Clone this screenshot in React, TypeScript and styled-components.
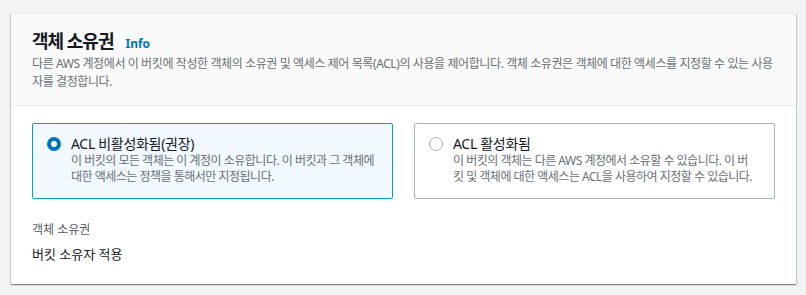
import React from "react";
import styled, { createGlobalStyle } from "styled-components";

const Global = createGlobalStyle`
  html, body { margin: 0; padding: 0; background: #f2f3f3; }
  body { font-family: "Noto Sans", "Noto Sans CJK KR", sans-serif; color: #16191f; }
`;

const Page = styled.div`
  padding: 13px 10px 11px 11px;
`;

const Card = styled.section`
  background: #ffffff;
  box-shadow: 0 1px 1px 0 rgba(0, 28, 36, 0.3), 1px 1px 1px 0 rgba(0, 28, 36, 0.15),
    -1px 1px 1px 0 rgba(0, 28, 36, 0.15);
  border-top: 1px solid #eaeded;
`;

const Header = styled.header`
  background: #fafafa;
  border-bottom: 1px solid #eaeded;
  padding: 14px 21px 14px 21px;
`;

const TitleRow = styled.div`
  display: flex;
  align-items: baseline;
  gap: 12px;
`;

const Title = styled.h2`
  margin: 0;
  font-size: 18px;
  line-height: 26px;
  font-weight: 700;
  letter-spacing: -1px;
  color: #16191f;
`;

const InfoLink = styled.a`
  font-size: 12px;
  font-weight: 700;
  color: #0073bb;
  text-decoration: none;
`;

const HeaderDesc = styled.p`
  margin: 1px 0 0 0;
  font-size: 12px;
  line-height: 18px;
  letter-spacing: -0.4px;
  color: #687078;
`;

const Body = styled.div`
  padding: 17px 21px 20px 21px;
`;

const Options = styled.div`
  display: grid;
  grid-template-columns: 1fr 1fr;
  gap: 21px;
`;

const Option = styled.label<{ $selected?: boolean }>`
  display: flex;
  gap: 10px;
  border: 1px solid ${(p) => (p.$selected ? "#00a1c9" : "#aab7b8")};
  background: ${(p) => (p.$selected ? "#f1f8fe" : "#ffffff")};
  border-radius: 2px;
  padding: 11px 16px 13px 14px;
  cursor: pointer;
`;

const Radio = styled.span<{ $selected?: boolean }>`
  flex: none;
  box-sizing: border-box;
  width: 14px;
  height: 14px;
  margin-top: 2px;
  border-radius: 50%;
  background: #ffffff;
  border: ${(p) => (p.$selected ? "4px solid #0073bb" : "1px solid #aab7b8")};
`;

const OptionText = styled.div`
  display: flex;
  flex-direction: column;
`;

const OptionLabel = styled.span`
  font-size: 14px;
  line-height: 18px;
  letter-spacing: -0.3px;
  color: #16191f;
`;

const OptionDesc = styled.span`
  font-size: 12px;
  line-height: 16px;
  letter-spacing: -0.5px;
  color: #687078;
`;

const Field = styled.div`
  margin-top: 22px;
  display: flex;
  flex-direction: column;
  gap: 5px;
`;

const FieldLabel = styled.span`
  font-size: 12px;
  line-height: 18px;
  color: #545b64;
`;

const FieldValue = styled.span`
  font-size: 13px;
  line-height: 20px;
  color: #16191f;
`;

export default function App() {
  return (
    <>
      <Global />
      <Page>
        <Card>
          <Header>
            <TitleRow>
              <Title>객체 소유권</Title>
              <InfoLink href="#">Info</InfoLink>
            </TitleRow>
            <HeaderDesc>
              다른 AWS 계정에서 이 버킷에 작성한 객체의 소유권 및 액세스 제어 목록(ACL)의 사용을 제어합니다. 객체 소유권은
              객체에 대한 액세스를 지정할 수 있는 사용자를 결정합니다.
            </HeaderDesc>
          </Header>
          <Body>
            <Options>
              <Option $selected>
                <Radio $selected />
                <OptionText>
                  <OptionLabel>ACL 비활성화됨(권장)</OptionLabel>
                  <OptionDesc>
                    이 버킷의 모든 객체는 이 계정이 소유합니다. 이 버킷과 그 객체에 대한 액세스는 정책을 통해서만
                    지정됩니다.
                  </OptionDesc>
                </OptionText>
              </Option>
              <Option>
                <Radio />
                <OptionText>
                  <OptionLabel>ACL 활성화됨</OptionLabel>
                  <OptionDesc>
                    이 버킷의 객체는 다른 AWS 계정에서 소유할 수 있습니다. 이 버킷 및 객체에 대한 액세스는 ACL을
                    사용하여 지정할 수 있습니다.
                  </OptionDesc>
                </OptionText>
              </Option>
            </Options>
            <Field>
              <FieldLabel>객체 소유권</FieldLabel>
              <FieldValue>버킷 소유자 적용</FieldValue>
            </Field>
          </Body>
        </Card>
      </Page>
    </>
  );
}
